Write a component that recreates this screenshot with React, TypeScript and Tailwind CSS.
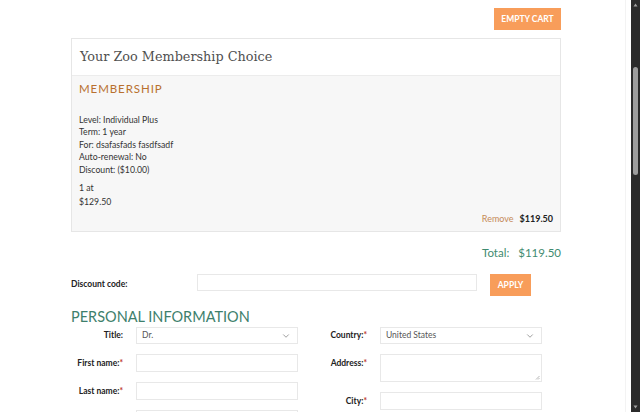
import { ChevronDown } from "lucide-react";

const lato = { fontFamily: "Lato, 'Open Sans', sans-serif" };
const serif = { fontFamily: "'DejaVu Serif', 'Liberation Serif', serif" };

const Label = ({ text, req }: { text: string; req?: boolean }) => (
  <span className="w-[52px] shrink-0 text-right text-[8.5px] font-bold text-[#222]" style={lato}>
    {text}
    {req && <span className="text-[#c0392b]">*</span>}
  </span>
);

const Select = ({ value }: { value: string }) => (
  <div className="flex h-[17px] w-[162px] items-center justify-between border border-[#e8e8e8] bg-white pl-[5px] pr-[6px]">
    <span className="text-[8.5px] text-[#555]" style={lato}>
      {value}
    </span>
    <ChevronDown size={10} strokeWidth={1.5} className="text-[#666]" />
  </div>
);

const Input = ({ tall }: { tall?: boolean }) => (
  <div
    className={`relative w-[162px] border border-[#e8e8e8] bg-white ${tall ? "h-[28px]" : "h-[18px]"}`}
  >
    {tall && (
      <svg className="absolute bottom-[1px] right-[1px]" width="5" height="5" viewBox="0 0 5 5">
        <path d="M4.5 1 L1 4.5 M4.5 3 L3 4.5" stroke="#999" strokeWidth="0.7" />
      </svg>
    )}
  </div>
);

const details = [
  "Level: Individual Plus",
  "Term: 1 year",
  "For: dsafasfads fasdfsadf",
  "Auto-renewal: No",
  "Discount: ($10.00)",
];

export default function App() {
  return (
    <div className="flex h-[412px] w-[640px] overflow-hidden bg-white">
      <div className="w-[626px] shrink-0 border-r border-[#f3f3f3]">
        <div className="ml-[71px] w-[490px]">
          {/* Cart header */}
          <div className="flex justify-end pt-[8px]">
            <button
              className="h-[22px] w-[67px] bg-[#f89d5a] text-[8.5px] font-bold text-white"
              style={lato}
            >
              EMPTY CART
            </button>
          </div>

          {/* Membership card */}
          <div className="mt-[8px] border border-[#e6e6e6]">
            <div className="flex h-[36px] items-center bg-white px-[8px]">
              <h2 className="text-[12.8px] text-[#4f4f4f]" style={serif}>
                Your Zoo Membership Choice
              </h2>
            </div>
            <div className="border-t border-[#ececec] bg-[#f7f7f7] px-[7px] pb-[6px] pt-[5px]" style={lato}>
              <p className="text-[11.5px] leading-[16px] tracking-[0.08em] text-[#b8702f]">MEMBERSHIP</p>
              <div className="mt-[17px] text-[8.7px] leading-[12.4px] text-[#333]">
                {details.map((d) => (
                  <p key={d}>{d}</p>
                ))}
              </div>
              <p className="mt-[6px] text-[8.7px] leading-[12px] text-[#333]">1 at</p>
              <p className="mt-[2px] text-[8.7px] leading-[12px] text-[#333]">$129.50</p>
              <div className="mt-[5px] flex items-center justify-end gap-[6px] text-[9px] leading-[12px]">
                <span className="text-[#c58a58]">Remove</span>
                <span className="font-bold text-[#222]">$119.50</span>
              </div>
            </div>
          </div>

          {/* Total */}
          <div className="mt-[13px] flex justify-end gap-[9px] text-[11.5px] leading-[15px] text-[#3f8b70]" style={lato}>
            <span>Total:</span>
            <span>$119.50</span>
          </div>

          {/* Discount */}
          <div className="mt-[14px] flex items-start" style={lato}>
            <span className="mt-[4px] w-[126px] shrink-0 text-[8.5px] font-bold text-[#222]">
              Discount code:
            </span>
            <div className="h-[17px] w-[280px] border border-[#e8e8e8] bg-white" />
            <button className="ml-[13px] h-[22px] w-[41px] bg-[#f89d5a] text-[8.5px] font-bold text-white">
              APPLY
            </button>
          </div>

          {/* Personal information */}
          <h3 className="mt-[12px] text-[14.5px] leading-[18px] text-[#3e7f6c]" style={lato}>
            PERSONAL INFORMATION
          </h3>
          <div className="mt-[1px] flex gap-[17px]">
            <div className="flex flex-col gap-[10px]">
              <div className="flex items-center gap-[13px]">
                <Label text="Title:" />
                <Select value="Dr." />
              </div>
              <div className="flex items-center gap-[13px]">
                <Label text="First name:" req />
                <Input />
              </div>
              <div className="flex items-center gap-[13px]">
                <Label text="Last name:" req />
                <Input />
              </div>
              <div className="flex items-center gap-[13px]">
                <span className="w-[52px]" />
                <Input />
              </div>
            </div>
            <div className="flex flex-col gap-[10px]">
              <div className="flex items-center gap-[13px]">
                <Label text="Country:" req />
                <Select value="United States" />
              </div>
              <div className="flex items-start gap-[13px]">
                <span className="mt-[3px] flex">
                  <Label text="Address:" req />
                </span>
                <Input tall />
              </div>
              <div className="flex items-center gap-[13px]">
                <Label text="City:" req />
                <Input />
              </div>
            </div>
          </div>
        </div>
      </div>

      {/* Scrollbar */}
      <div className="ml-[5px] flex w-[9px] shrink-0 flex-col items-center bg-[#2b2b2b]">
        <svg className="mt-[3px]" width="5" height="4" viewBox="0 0 5 4">
          <path d="M2.5 0.5 L4.5 3.5 L0.5 3.5 Z" fill="#a0a0a0" />
        </svg>
        <div className="mt-[60px] h-[108px] w-[5px] rounded-full bg-[#9d9d9d]" />
        <div className="flex-1" />
        <svg className="mb-[3px]" width="5" height="4" viewBox="0 0 5 4">
          <path d="M2.5 3.5 L4.5 0.5 L0.5 0.5 Z" fill="#a0a0a0" />
        </svg>
      </div>
    </div>
  );
}
